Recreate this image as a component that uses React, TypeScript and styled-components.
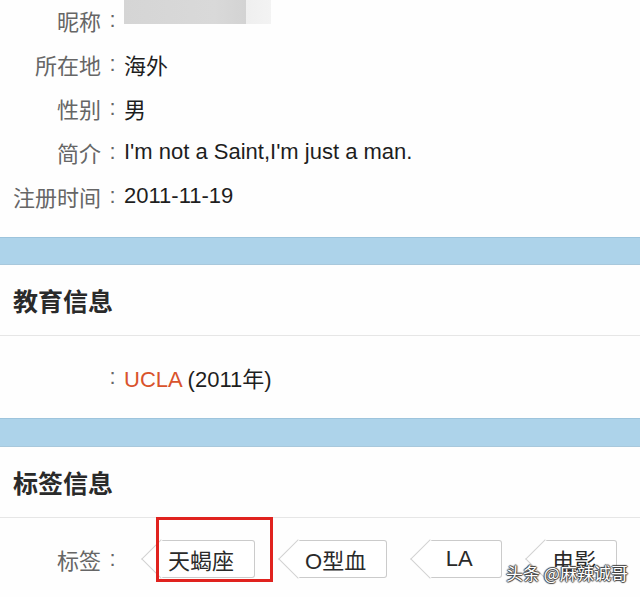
import styled, { createGlobalStyle } from 'styled-components';

const GlobalStyle = createGlobalStyle`
  html, body {
    margin: 0;
    padding: 0;
    background: #fefefe;
  }
  body {
    font-family: 'Liberation Sans', 'Noto Sans CJK SC', sans-serif;
  }
`;

const profileRows = [
  { label: '所在地', value: '海外' },
  { label: '性别', value: '男' },
  { label: '简介', value: "I'm not a Saint,I'm just a man." },
  { label: '注册时间', value: '2011-11-19' },
];

const tags = ['天蝎座', 'O型血', 'LA', '电影'];

const Page = styled.div`
  position: relative;
  height: 597px;
  overflow: hidden;
  background: #fefefe;
`;

const InfoList = styled.div`
  margin-top: -2px;
  padding-bottom: 19px;
`;

const InfoRow = styled.div`
  display: flex;
  align-items: center;
  height: 44px;
  font-size: 22px;
`;

const Label = styled.span`
  width: 101px;
  text-align: right;
  color: #666;
  flex-shrink: 0;
`;

const Colon = styled.span`
  width: 23px;
  text-align: center;
  color: #666;
  flex-shrink: 0;
`;

const Value = styled.span`
  color: #1e1e1e;
  white-space: nowrap;
`;

const BlurBox = styled.div`
  align-self: flex-start;
  width: 147px;
  height: 26px;
  background: linear-gradient(90deg, #d5d5d5 0, #d9d9d9 90px, #d3d3d3 122px, #efefef 122px, #f3f3f3 147px);
`;

const Band = styled.div<{ $height: number }>`
  height: ${p => p.$height}px;
  background: #add3ea;
  border-top: 1px solid #9dc4dc;
  border-bottom: 1px solid #a8c8dc;
`;

const SectionHeader = styled.h2`
  margin: 0;
  display: flex;
  align-items: center;
  height: 70px;
  padding-left: 13px;
  font-size: 25px;
  font-weight: bold;
  color: #2a2a2a;
  border-bottom: 1px solid #e6e6e6;
`;

const SectionBody = styled.div`
  display: flex;
  align-items: center;
  height: 82px;
  font-size: 22px;
`;

const School = styled.span`
  color: #d9532c;
`;

const TagList = styled.div`
  display: flex;
  align-items: center;
  gap: 42px;
  padding-left: 36px;
`;

const Tag = styled.span`
  position: relative;
  z-index: 0;
  display: flex;
  align-items: center;
  justify-content: center;
  box-sizing: border-box;
  height: 38px;
  min-width: 73px;
  padding: 0 20px 0 8px;
  background: #fff;
  border: 1px solid #cbcbcb;
  border-left: none;
  border-radius: 0 3px 3px 0;
  color: #2a2a2a;
  font-size: 22px;
  white-space: nowrap;

  &::before {
    content: '';
    position: absolute;
    z-index: -1;
    left: -13.5px;
    top: 4px;
    width: 27px;
    height: 27px;
    background: #fff;
    border-left: 1px solid #d2d2d2;
    border-bottom: 1px solid #d2d2d2;
    transform: rotate(45deg);
  }
`;

const Highlight = styled.span`
  position: absolute;
  left: -4px;
  top: -24px;
  right: -19px;
  bottom: -5px;
  border: 3px solid #e0221e;
  pointer-events: none;
`;

const Watermark = styled.div`
  position: absolute;
  left: 506px;
  top: 561px;
  font-family: 'Noto Sans CJK SC', sans-serif;
  font-size: 17px;
  line-height: 24px;
  color: #fff;
  text-shadow: 1px 0 1px #3a3a3a, -1px 0 1px #3a3a3a, 0 1px 1px #3a3a3a, 0 -1px 1px #3a3a3a;
  white-space: nowrap;
`;

export default function App() {
  return (
    <>
      <GlobalStyle />
      <Page>
        <InfoList>
          <InfoRow>
            <Label>昵称</Label>
            <Colon>:</Colon>
            <BlurBox />
          </InfoRow>
          {profileRows.map(row => (
            <InfoRow key={row.label}>
              <Label>{row.label}</Label>
              <Colon>:</Colon>
              <Value>{row.value}</Value>
            </InfoRow>
          ))}
        </InfoList>

        <Band $height={26} />
        <SectionHeader>教育信息</SectionHeader>
        <SectionBody>
          <Label />
          <Colon>:</Colon>
          <Value>
            <School>UCLA</School> (2011年)
          </Value>
        </SectionBody>

        <Band $height={27} />
        <SectionHeader>标签信息</SectionHeader>
        <SectionBody>
          <Label>标签</Label>
          <Colon>:</Colon>
          <TagList>
            {tags.map((tag, index) => (
              <Tag key={tag}>
                {tag}
                {index === 0 && <Highlight />}
              </Tag>
            ))}
          </TagList>
        </SectionBody>

        <Watermark>头条 @麻辣诚哥</Watermark>
      </Page>
    </>
  );
}
